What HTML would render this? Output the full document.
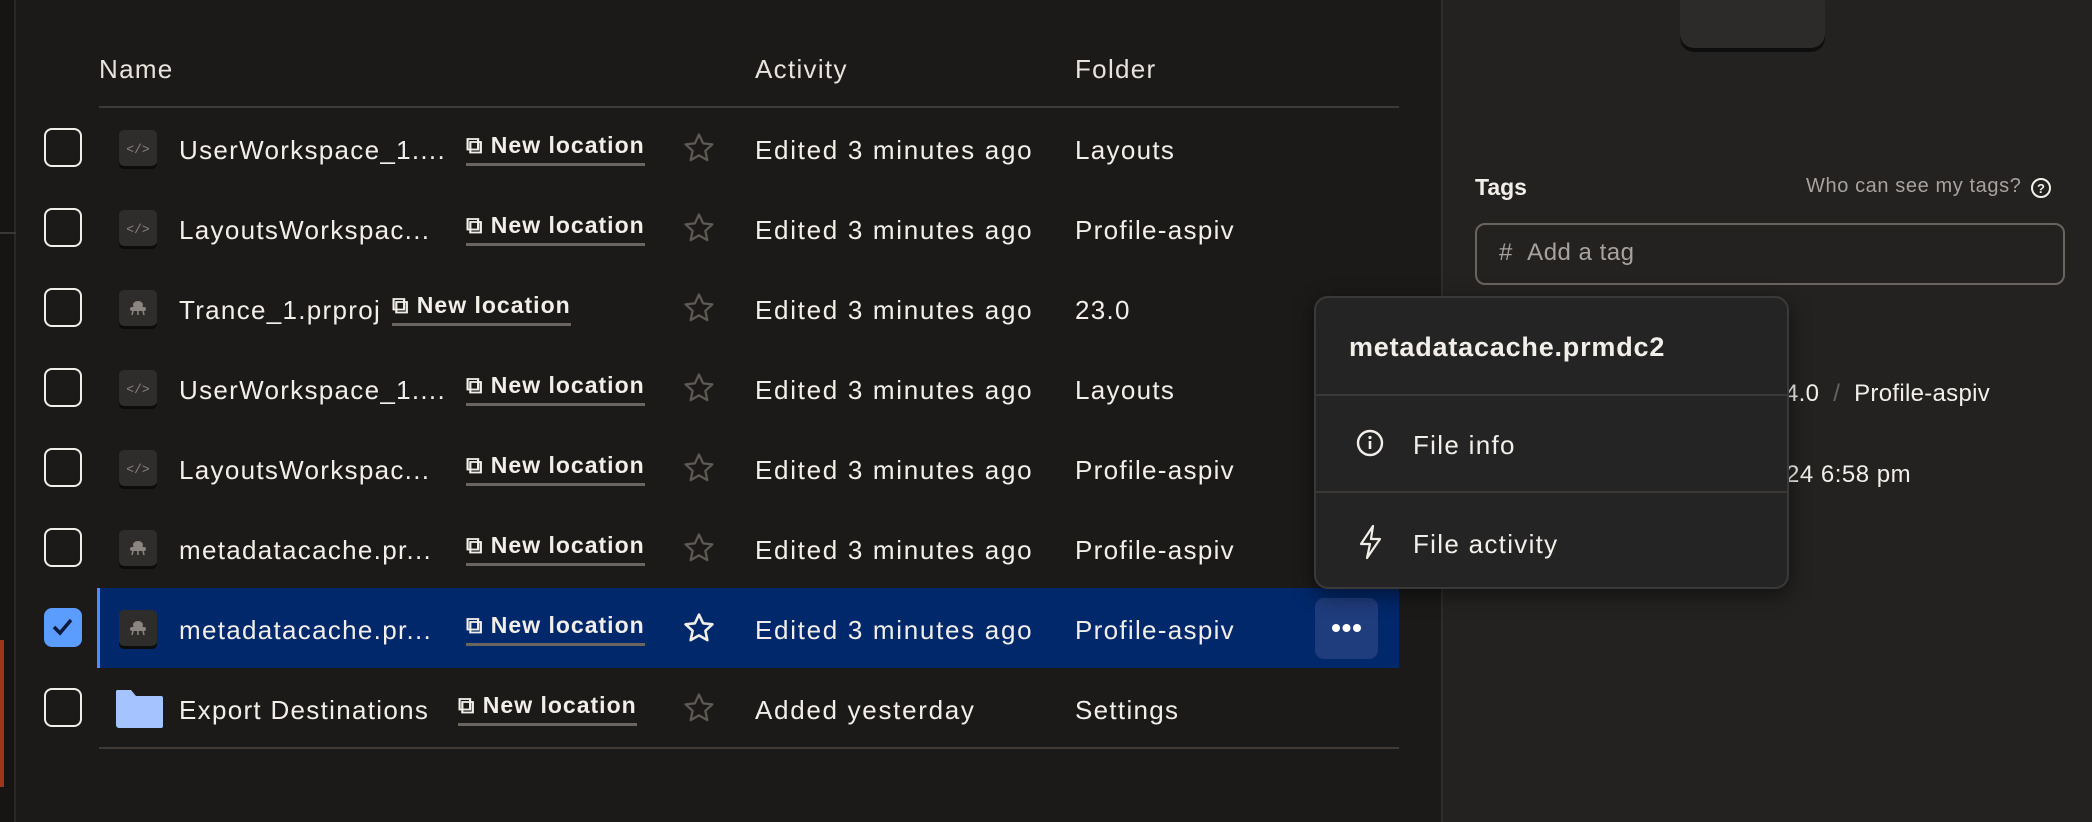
<!DOCTYPE html>
<html><head><meta charset="utf-8"><style>
*{margin:0;padding:0;box-sizing:border-box}
body{width:2092px;height:822px;background:#1b1a19;font-family:"Liberation Sans",sans-serif;color:#f2efea;position:relative;overflow:hidden}
.abs{position:absolute}
.t{font-size:26px;letter-spacing:1.3px;white-space:nowrap}
.row{position:absolute;left:0;width:1400px;height:80px}
.cb{position:absolute;left:44px;width:38px;height:39px;border:2.5px solid #f2efea;border-radius:8px;top:20px}
.ic{position:absolute;left:119px;top:22px;width:38px;height:36px;background:#2f2d2b;border-radius:5px;box-shadow:0 3px 0 #0c0b0b}
.nm{position:absolute;left:179px;top:27px}
.nl{position:absolute;top:24px;font-size:23px;font-weight:bold;letter-spacing:1px;white-space:nowrap;padding-bottom:4px;border-bottom:3px solid #6b6560}
.st{position:absolute;left:682px;top:23px}
.act{position:absolute;left:755px;top:27px;letter-spacing:1.7px}
.fol{position:absolute;left:1075px;top:27px}
</style></head><body>
<div class="abs" style="left:0;top:0;width:16px;height:822px;background:#161514;border-right:2px solid #2a2928"></div>
<div class="abs" style="left:0;top:232px;width:16px;height:2px;background:#3a3836"></div>
<div class="abs" style="left:0;top:640px;width:4px;height:147px;background:#9c3618"></div>

<div class="abs t" style="left:99px;top:54px;color:#e8e3dd">Name</div>
<div class="abs t" style="left:755px;top:54px;color:#e8e3dd">Activity</div>
<div class="abs t" style="left:1075px;top:54px;color:#e8e3dd">Folder</div>
<div class="abs" style="left:99px;top:106px;width:1300px;height:2px;background:#3d3a38"></div>
<div class="abs" style="left:99px;top:747px;width:1300px;height:2px;background:#3d3a38"></div>

<div class="row" style="top:108px">
<div class="cb"></div><div class="ic"><svg width="38" height="36"><text x="19" y="23" font-size="13" fill="#8a8580" text-anchor="middle" font-family="Liberation Mono">&lt;/&gt;</text></svg></div>
<div class="nm t">UserWorkspace_1....</div><div class="nl" style="left:466px">&#x29C9; New location</div>
<svg class="st" width="34" height="34" viewBox="0 0 24 24"><path d="M12 2.5l2.9 6.2 6.6.7-5 4.6 1.4 6.6L12 17.2 6.1 20.6l1.4-6.6-5-4.6 6.6-.7z" fill="none" stroke="#5d5955" stroke-width="1.6" stroke-linejoin="round"/></svg>
<div class="act t">Edited 3 minutes ago</div><div class="fol t">Layouts</div></div>

<div class="row" style="top:188px">
<div class="cb"></div><div class="ic"><svg width="38" height="36"><text x="19" y="23" font-size="13" fill="#8a8580" text-anchor="middle" font-family="Liberation Mono">&lt;/&gt;</text></svg></div>
<div class="nm t">LayoutsWorkspac...</div><div class="nl" style="left:466px">&#x29C9; New location</div>
<svg class="st" width="34" height="34" viewBox="0 0 24 24"><path d="M12 2.5l2.9 6.2 6.6.7-5 4.6 1.4 6.6L12 17.2 6.1 20.6l1.4-6.6-5-4.6 6.6-.7z" fill="none" stroke="#5d5955" stroke-width="1.6" stroke-linejoin="round"/></svg>
<div class="act t">Edited 3 minutes ago</div><div class="fol t">Profile-aspiv</div></div>

<div class="row" style="top:268px">
<div class="cb"></div><div class="ic"><svg width="38" height="36"><ellipse cx="19" cy="15" rx="5" ry="4" fill="#8a8580"/><rect x="11" y="17" width="16" height="4" rx="2" fill="#8a8580"/><path d="M14 21l-1 4M19 21v4M24 21l1 4" stroke="#8a8580" stroke-width="1.5"/></svg></div>
<div class="nm t">Trance_1.prproj</div><div class="nl" style="left:392px">&#x29C9; New location</div>
<svg class="st" width="34" height="34" viewBox="0 0 24 24"><path d="M12 2.5l2.9 6.2 6.6.7-5 4.6 1.4 6.6L12 17.2 6.1 20.6l1.4-6.6-5-4.6 6.6-.7z" fill="none" stroke="#5d5955" stroke-width="1.6" stroke-linejoin="round"/></svg>
<div class="act t">Edited 3 minutes ago</div><div class="fol t">23.0</div></div>

<div class="row" style="top:348px">
<div class="cb"></div><div class="ic"><svg width="38" height="36"><text x="19" y="23" font-size="13" fill="#8a8580" text-anchor="middle" font-family="Liberation Mono">&lt;/&gt;</text></svg></div>
<div class="nm t">UserWorkspace_1....</div><div class="nl" style="left:466px">&#x29C9; New location</div>
<svg class="st" width="34" height="34" viewBox="0 0 24 24"><path d="M12 2.5l2.9 6.2 6.6.7-5 4.6 1.4 6.6L12 17.2 6.1 20.6l1.4-6.6-5-4.6 6.6-.7z" fill="none" stroke="#5d5955" stroke-width="1.6" stroke-linejoin="round"/></svg>
<div class="act t">Edited 3 minutes ago</div><div class="fol t">Layouts</div></div>

<div class="row" style="top:428px">
<div class="cb"></div><div class="ic"><svg width="38" height="36"><text x="19" y="23" font-size="13" fill="#8a8580" text-anchor="middle" font-family="Liberation Mono">&lt;/&gt;</text></svg></div>
<div class="nm t">LayoutsWorkspac...</div><div class="nl" style="left:466px">&#x29C9; New location</div>
<svg class="st" width="34" height="34" viewBox="0 0 24 24"><path d="M12 2.5l2.9 6.2 6.6.7-5 4.6 1.4 6.6L12 17.2 6.1 20.6l1.4-6.6-5-4.6 6.6-.7z" fill="none" stroke="#5d5955" stroke-width="1.6" stroke-linejoin="round"/></svg>
<div class="act t">Edited 3 minutes ago</div><div class="fol t">Profile-aspiv</div></div>

<div class="row" style="top:508px">
<div class="cb"></div><div class="ic"><svg width="38" height="36"><ellipse cx="19" cy="15" rx="5" ry="4" fill="#8a8580"/><rect x="11" y="17" width="16" height="4" rx="2" fill="#8a8580"/><path d="M14 21l-1 4M19 21v4M24 21l1 4" stroke="#8a8580" stroke-width="1.5"/></svg></div>
<div class="nm t">metadatacache.pr...</div><div class="nl" style="left:466px">&#x29C9; New location</div>
<svg class="st" width="34" height="34" viewBox="0 0 24 24"><path d="M12 2.5l2.9 6.2 6.6.7-5 4.6 1.4 6.6L12 17.2 6.1 20.6l1.4-6.6-5-4.6 6.6-.7z" fill="none" stroke="#5d5955" stroke-width="1.6" stroke-linejoin="round"/></svg>
<div class="act t">Edited 3 minutes ago</div><div class="fol t">Profile-aspiv</div></div>

<div class="abs" style="left:97px;top:588px;width:1302px;height:80px;background:#00286a;border-left:3px solid #4c8dff"></div>
<div class="row" style="top:588px">
<div class="cb" style="background:#5b9cff;border-color:#5b9cff"><svg width="33" height="34" viewBox="0 0 33 34"><path d="M8 17l6 6 11-13" fill="none" stroke="#0b1a3a" stroke-width="3.5"/></svg></div>
<div class="ic"><svg width="38" height="36"><ellipse cx="19" cy="15" rx="5" ry="4" fill="#8a8580"/><rect x="11" y="17" width="16" height="4" rx="2" fill="#8a8580"/><path d="M14 21l-1 4M19 21v4M24 21l1 4" stroke="#8a8580" stroke-width="1.5"/></svg></div>
<div class="nm t">metadatacache.pr...</div><div class="nl" style="left:466px">&#x29C9; New location</div>
<svg class="st" width="34" height="34" viewBox="0 0 24 24"><path d="M12 2.5l2.9 6.2 6.6.7-5 4.6 1.4 6.6L12 17.2 6.1 20.6l1.4-6.6-5-4.6 6.6-.7z" fill="none" stroke="#f2efea" stroke-width="1.8" stroke-linejoin="round"/></svg>
<div class="act t">Edited 3 minutes ago</div><div class="fol t">Profile-aspiv</div>
<div class="abs" style="left:1315px;top:10px;width:63px;height:61px;background:#1f3c7c;border-radius:9px"><svg width="63" height="61"><circle cx="21" cy="30" r="4" fill="#fff"/><circle cx="31.5" cy="30" r="4" fill="#fff"/><circle cx="42" cy="30" r="4" fill="#fff"/></svg></div></div>

<div class="row" style="top:668px">
<div class="cb"></div>
<svg class="abs" style="left:114px;top:20px" width="50" height="41"><path d="M3 2h14l5 6h25a2 2 0 0 1 2 2v28a2 2 0 0 1-2 2H5a3 3 0 0 1-3-3V3z" fill="#a5c3ff"/></svg>
<div class="nm t">Export Destinations</div><div class="nl" style="left:458px">&#x29C9; New location</div>
<svg class="st" width="34" height="34" viewBox="0 0 24 24"><path d="M12 2.5l2.9 6.2 6.6.7-5 4.6 1.4 6.6L12 17.2 6.1 20.6l1.4-6.6-5-4.6 6.6-.7z" fill="none" stroke="#5d5955" stroke-width="1.6" stroke-linejoin="round"/></svg>
<div class="act t">Added yesterday</div><div class="fol t">Settings</div></div>

<!-- right panel -->
<div class="abs" style="left:1441px;top:0;width:651px;height:822px;background:#232221;border-left:2px solid #2e2d2c"></div>
<div class="abs" style="left:1680px;top:-10px;width:145px;height:58px;background:#2c2b2a;border-radius:14px;box-shadow:0 4px 0 #0f0e0e"></div>
<div class="abs" style="left:1475px;top:174px;font-size:23px;font-weight:bold">Tags</div>
<div class="abs" style="left:1806px;top:175px;font-size:20px;color:#a8a29e;letter-spacing:.6px">Who can see my tags?</div>
<svg class="abs" style="left:2030px;top:177px" width="22" height="22"><circle cx="11" cy="11" r="9" fill="none" stroke="#f2efea" stroke-width="2"/><text x="11" y="16" font-size="13" font-weight="bold" fill="#f2efea" text-anchor="middle" font-family="Liberation Sans">?</text></svg>
<div class="abs" style="left:1475px;top:223px;width:590px;height:62px;border:2px solid #6a645f;border-radius:10px"></div>
<div class="abs" style="left:1499px;top:239px;font-size:24px;color:#a8a29e;letter-spacing:.5px"># &nbsp;Add a tag</div>
<div class="abs" style="left:1785px;top:380px;font-size:24px;letter-spacing:.3px">4.0 <span style="color:#6a645f">&nbsp;/&nbsp;</span> Profile-aspiv</div>
<div class="abs" style="left:1786px;top:461px;font-size:24px;letter-spacing:.5px">24 6:58 pm</div>

<!-- menu -->
<div class="abs" style="left:1314px;top:296px;width:475px;height:293px;background:#242424;border:2px solid #3a3938;border-radius:14px;box-shadow:0 6px 20px rgba(0,0,0,.5)">
<div class="abs" style="left:33px;top:34px;font-size:27px;font-weight:bold;letter-spacing:.8px">metadatacache.prmdc2</div>
<div class="abs" style="left:0;top:96px;width:100%;height:2px;background:#3a3938"></div>
<svg class="abs" style="left:39px;top:130px" width="30" height="30"><circle cx="15" cy="15" r="12" fill="none" stroke="#f2efea" stroke-width="2.4"/><circle cx="15" cy="9.5" r="1.6" fill="#f2efea"/><path d="M15 13v8" stroke="#f2efea" stroke-width="2.6"/></svg>
<div class="abs t" style="left:97px;top:132px">File info</div>
<div class="abs" style="left:0;top:193px;width:100%;height:2px;background:#3a3938"></div>
<svg class="abs" style="left:40px;top:226px" width="28" height="36"><path d="M17 2L5 20h9l-3 14 13-19h-9z" fill="none" stroke="#f2efea" stroke-width="2.2" stroke-linejoin="round"/></svg>
<div class="abs t" style="left:97px;top:231px">File activity</div>
</div>
</body></html>
